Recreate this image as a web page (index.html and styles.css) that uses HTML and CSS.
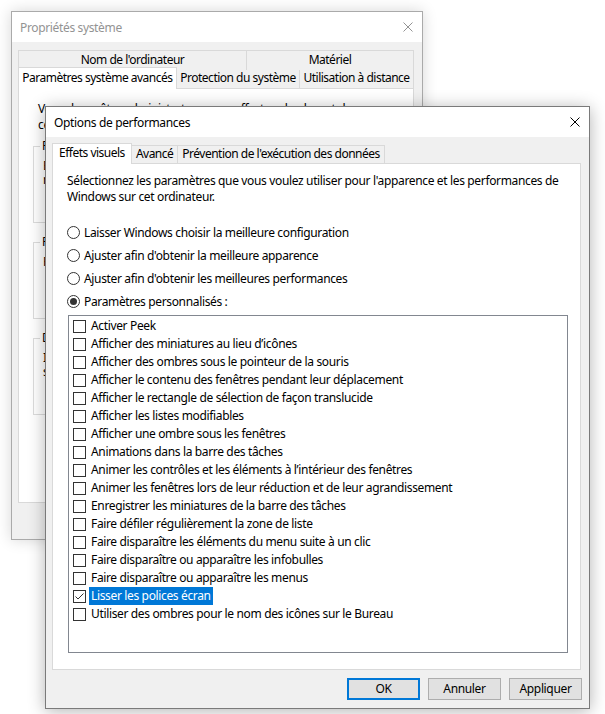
FILE: index.html
```html
<!DOCTYPE html>
<html lang="fr">

<head>
    <meta charset="utf-8">
    <title>Options de performances</title>
    <link rel="stylesheet" href="styles.css">
</head>

<body>
    <div class="desktop">

        <!-- fenêtre arrière : Propriétés système -->
        <div class="window window-back">
            <div class="titlebar">
                <span class="title">Propriétés système</span>
                <svg class="close" width="10" height="10" viewBox="0 0 10 10">
                    <path d="M0.5 0.5L9.5 9.5M9.5 0.5L0.5 9.5" />
                </svg>
            </div>
            <div class="window-body">
                <div class="tab-row tab-row-top">
                    <div class="tab tab-fill">Nom de l'ordinateur</div>
                    <div class="tab tab-fill">Matériel</div>
                </div>
                <div class="tab-row">
                    <div class="tab tab-fill tab-active">Paramètres système avancés</div>
                    <div class="tab tab-fill">Protection du système</div>
                    <div class="tab tab-fill">Utilisation à distance</div>
                </div>
                <div class="tab-panel back-panel">
                    <p class="back-intro">Vous devez être administrateur pour effectuer la plupart de<br>ces modifications.</p>
                    <div class="group">
                        <span class="group-title">Performances</span>
                        <p>Effets visuels, planification du processeur, utilisation de la mémoire et mémoire virtuelle</p>
                    </div>
                    <div class="group">
                        <span class="group-title">Profil des utilisateurs</span>
                        <p>Paramètres du Bureau liés à votre connexion</p>
                    </div>
                    <div class="group">
                        <span class="group-title">Démarrage et récupération</span>
                        <p>Informations sur le démarrage du système, la défaillance du système et le débogage</p>
                    </div>
                </div>
            </div>
        </div>

        <!-- fenêtre au premier plan : Options de performances -->
        <div class="window window-front">
            <div class="titlebar">
                <span class="title">Options de performances</span>
                <svg class="close" width="10" height="10" viewBox="0 0 10 10">
                    <path d="M0.5 0.5L9.5 9.5M9.5 0.5L0.5 9.5" />
                </svg>
            </div>
            <div class="window-body front-body">
                <div class="tab-row">
                    <div class="tab tab-active">Effets visuels</div>
                    <div class="tab">Avancé</div>
                    <div class="tab">Prévention de l'exécution des données</div>
                </div>
                <div class="tab-panel front-panel">
                    <p class="intro">Sélectionnez les paramètres que vous voulez utiliser pour l'apparence et les performances de Windows sur cet ordinateur.</p>

                    <div class="options">
                        <div class="option"><span class="radio"></span>Laisser Windows choisir la meilleure configuration</div>
                        <div class="option"><span class="radio"></span>Ajuster afin d'obtenir la meilleure apparence</div>
                        <div class="option"><span class="radio"></span>Ajuster afin d'obtenir les meilleures performances</div>
                        <div class="option"><span class="radio radio-on"></span>Paramètres personnalisés :</div>
                    </div>

                    <!-- liste des effets -->
                    <div class="effects">
                        <div class="effect"><span class="check"></span><span class="label">Activer Peek</span></div>
                        <div class="effect"><span class="check"></span><span class="label">Afficher des miniatures au lieu d’icônes</span></div>
                        <div class="effect"><span class="check"></span><span class="label">Afficher des ombres sous le pointeur de la souris</span></div>
                        <div class="effect"><span class="check"></span><span class="label">Afficher le contenu des fenêtres pendant leur déplacement</span></div>
                        <div class="effect"><span class="check"></span><span class="label">Afficher le rectangle de sélection de façon translucide</span></div>
                        <div class="effect"><span class="check"></span><span class="label">Afficher les listes modifiables</span></div>
                        <div class="effect"><span class="check"></span><span class="label">Afficher une ombre sous les fenêtres</span></div>
                        <div class="effect"><span class="check"></span><span class="label">Animations dans la barre des tâches</span></div>
                        <div class="effect"><span class="check"></span><span class="label">Animer les contrôles et les éléments à l’intérieur des fenêtres</span></div>
                        <div class="effect"><span class="check"></span><span class="label">Animer les fenêtres lors de leur réduction et de leur agrandissement</span></div>
                        <div class="effect"><span class="check"></span><span class="label">Enregistrer les miniatures de la barre des tâches</span></div>
                        <div class="effect"><span class="check"></span><span class="label">Faire défiler régulièrement la zone de liste</span></div>
                        <div class="effect"><span class="check"></span><span class="label">Faire disparaître les éléments du menu suite à un clic</span></div>
                        <div class="effect"><span class="check"></span><span class="label">Faire disparaître ou apparaître les infobulles</span></div>
                        <div class="effect"><span class="check"></span><span class="label">Faire disparaître ou apparaître les menus</span></div>
                        <div class="effect effect-selected">
                            <span class="check">
                                <svg width="11" height="11" viewBox="0 0 11 11">
                                    <path d="M1.5 5.5L4 8L9.5 2.5" />
                                </svg>
                            </span>
                            <span class="label">Lisser les polices écran</span>
                        </div>
                        <div class="effect"><span class="check"></span><span class="label">Utiliser des ombres pour le nom des icônes sur le Bureau</span></div>
                    </div>
                </div>

                <div class="buttons">
                    <div class="button button-default">OK</div>
                    <div class="button">Annuler</div>
                    <div class="button">Appliquer</div>
                </div>
            </div>
        </div>

    </div>
</body>

</html>
```

FILE: styles.css
```css
* {
    box-sizing: border-box;
}

body {
    margin: 0;
    background-color: #fff;
    font-family: "Noto Sans", "DejaVu Sans", sans-serif;
    font-size: 12px;
    letter-spacing: -0.35px;
    color: #000;
}

p {
    margin: 0;
}

/* le bureau : les fenêtres y sont posées librement */
.desktop {
    position: relative;
    width: 605px;
    height: 714px;
    overflow: hidden;
}

.window {
    position: absolute;
    display: flex;
    flex-direction: column;
    background-color: #f0f0f0;
    overflow: hidden;
}

.window-back {
    left: 11px;
    top: 11px;
    width: 412px;
    height: 529px;
    border: 1px solid #aaaaaa;
    box-shadow: 0 0 14px rgba(0, 0, 0, 0.16);
}

.window-front {
    left: 45px;
    top: 106px;
    width: 545px;
    height: 603px;
    border: 1px solid #7a7a7a;
    box-shadow: 0 2px 16px rgba(0, 0, 0, 0.3);
}

/* barre de titre */
.titlebar {
    flex-shrink: 0;
    height: 30px;
    display: flex;
    align-items: center;
    justify-content: space-between;
    padding: 0 9px 0 8px;
    background-color: #fff;
}

.close path {
    stroke: #000;
    stroke-width: 1;
    fill: none;
}

.window-back .title {
    color: #939393;
}

.window-back .close path {
    stroke: #939393;
}

.window-body {
    display: flex;
    flex-direction: column;
    flex: 1;
    padding: 8px 8px 0 6px;
}

.front-body {
    padding: 6px 8px 8px 6px;
}

/* onglets */
.tab-row {
    display: flex;
    align-items: flex-end;
    margin-bottom: -1px;
    position: relative;
    z-index: 1;
}

.tab {
    height: 18px;
    line-height: 16px;
    margin-bottom: 1px;
    padding: 0 4px;
    border: 1px solid #d9d9d9;
    border-bottom: none;
    background-color: #f0f0f0;
    white-space: nowrap;
    letter-spacing: -0.5px;
}

.tab + .tab {
    border-left: none;
}

.tab-active {
    height: 21px;
    margin-bottom: 0;
    padding: 1px 6px 0 6px;
    background-color: #fff;
    position: relative;
    z-index: 2;
}

.tab-fill {
    flex: 1 1 auto;
    padding: 0 2px;
    text-align: center;
}

.tab-row-top {
    margin-bottom: 0;
    z-index: 0;
}

.tab-row-top .tab {
    height: 20px;
    margin-bottom: 0;
    padding-top: 1px;
}

.window-back .tab-row-top + .tab-row .tab {
    height: 18px;
    border-top: none;
}

.window-back .tab-row-top + .tab-row .tab-active {
    height: 22px;
    margin-top: -3px;
    border-top: 1px solid #d9d9d9;
    padding-top: 2px;
}

.tab-panel {
    background-color: #fff;
    border: 1px solid #d9d9d9;
}

/* contenu de la fenêtre arrière */
.back-panel {
    height: 415px;
    padding: 12px 20px 0 14px;
    line-height: 16px;
}

.back-intro {
    padding-left: 5px;
    white-space: nowrap;
}

.group {
    position: relative;
    height: 77px;
    margin-top: 13px;
    padding: 12px 9px 0 9px;
    border: 1px solid #dcdcdc;
}

.group + .group {
    margin-top: 19px;
}

/* le titre du cadre est posé sur sa bordure */
.group-title {
    position: absolute;
    top: -9px;
    left: 6px;
    padding: 0 2px;
    background-color: #fff;
}

.group p {
    line-height: 14px;
}

/* contenu de la fenêtre Options de performances */
.front-panel {
    flex: 1;
    padding: 9px 12px 0 14px;
}

.intro {
    line-height: 16px;
}

.options {
    margin-top: 16px;
}

.option {
    height: 23px;
    display: flex;
    align-items: center;
    white-space: nowrap;
}

.radio {
    width: 13px;
    height: 13px;
    margin-right: 4px;
    border: 1px solid #333;
    border-radius: 50%;
    display: flex;
    align-items: center;
    justify-content: center;
    background-color: #fff;
}

.radio-on::after {
    content: "";
    width: 7px;
    height: 7px;
    border-radius: 50%;
    background-color: #333;
}

.effects {
    width: 500px;
    height: 338px;
    margin: 2px 0 0 1px;
    padding: 1px 0 0 4px;
    border: 1px solid #828790;
}

.effect {
    height: 18px;
    display: flex;
    align-items: center;
    white-space: nowrap;
}

.check {
    width: 13px;
    height: 13px;
    margin-right: 3px;
    border: 1px solid #333;
    background-color: #fff;
    display: flex;
}

.check path {
    stroke: #333;
    stroke-width: 1;
    fill: none;
}

.label {
    height: 18px;
    line-height: 18px;
    padding: 0 2px;
}

.effect-selected .label {
    background-color: #0078d7;
    color: #fff;
}

/* boutons du bas */
.buttons {
    display: flex;
    justify-content: flex-end;
    gap: 8px;
    margin: 8px -1px 0 0;
}

.button {
    width: 73px;
    height: 22px;
    line-height: 20px;
    text-align: center;
    background-color: #e1e1e1;
    border: 1px solid #adadad;
}

.button-default {
    border: 2px solid #0078d7;
    line-height: 18px;
}
```
